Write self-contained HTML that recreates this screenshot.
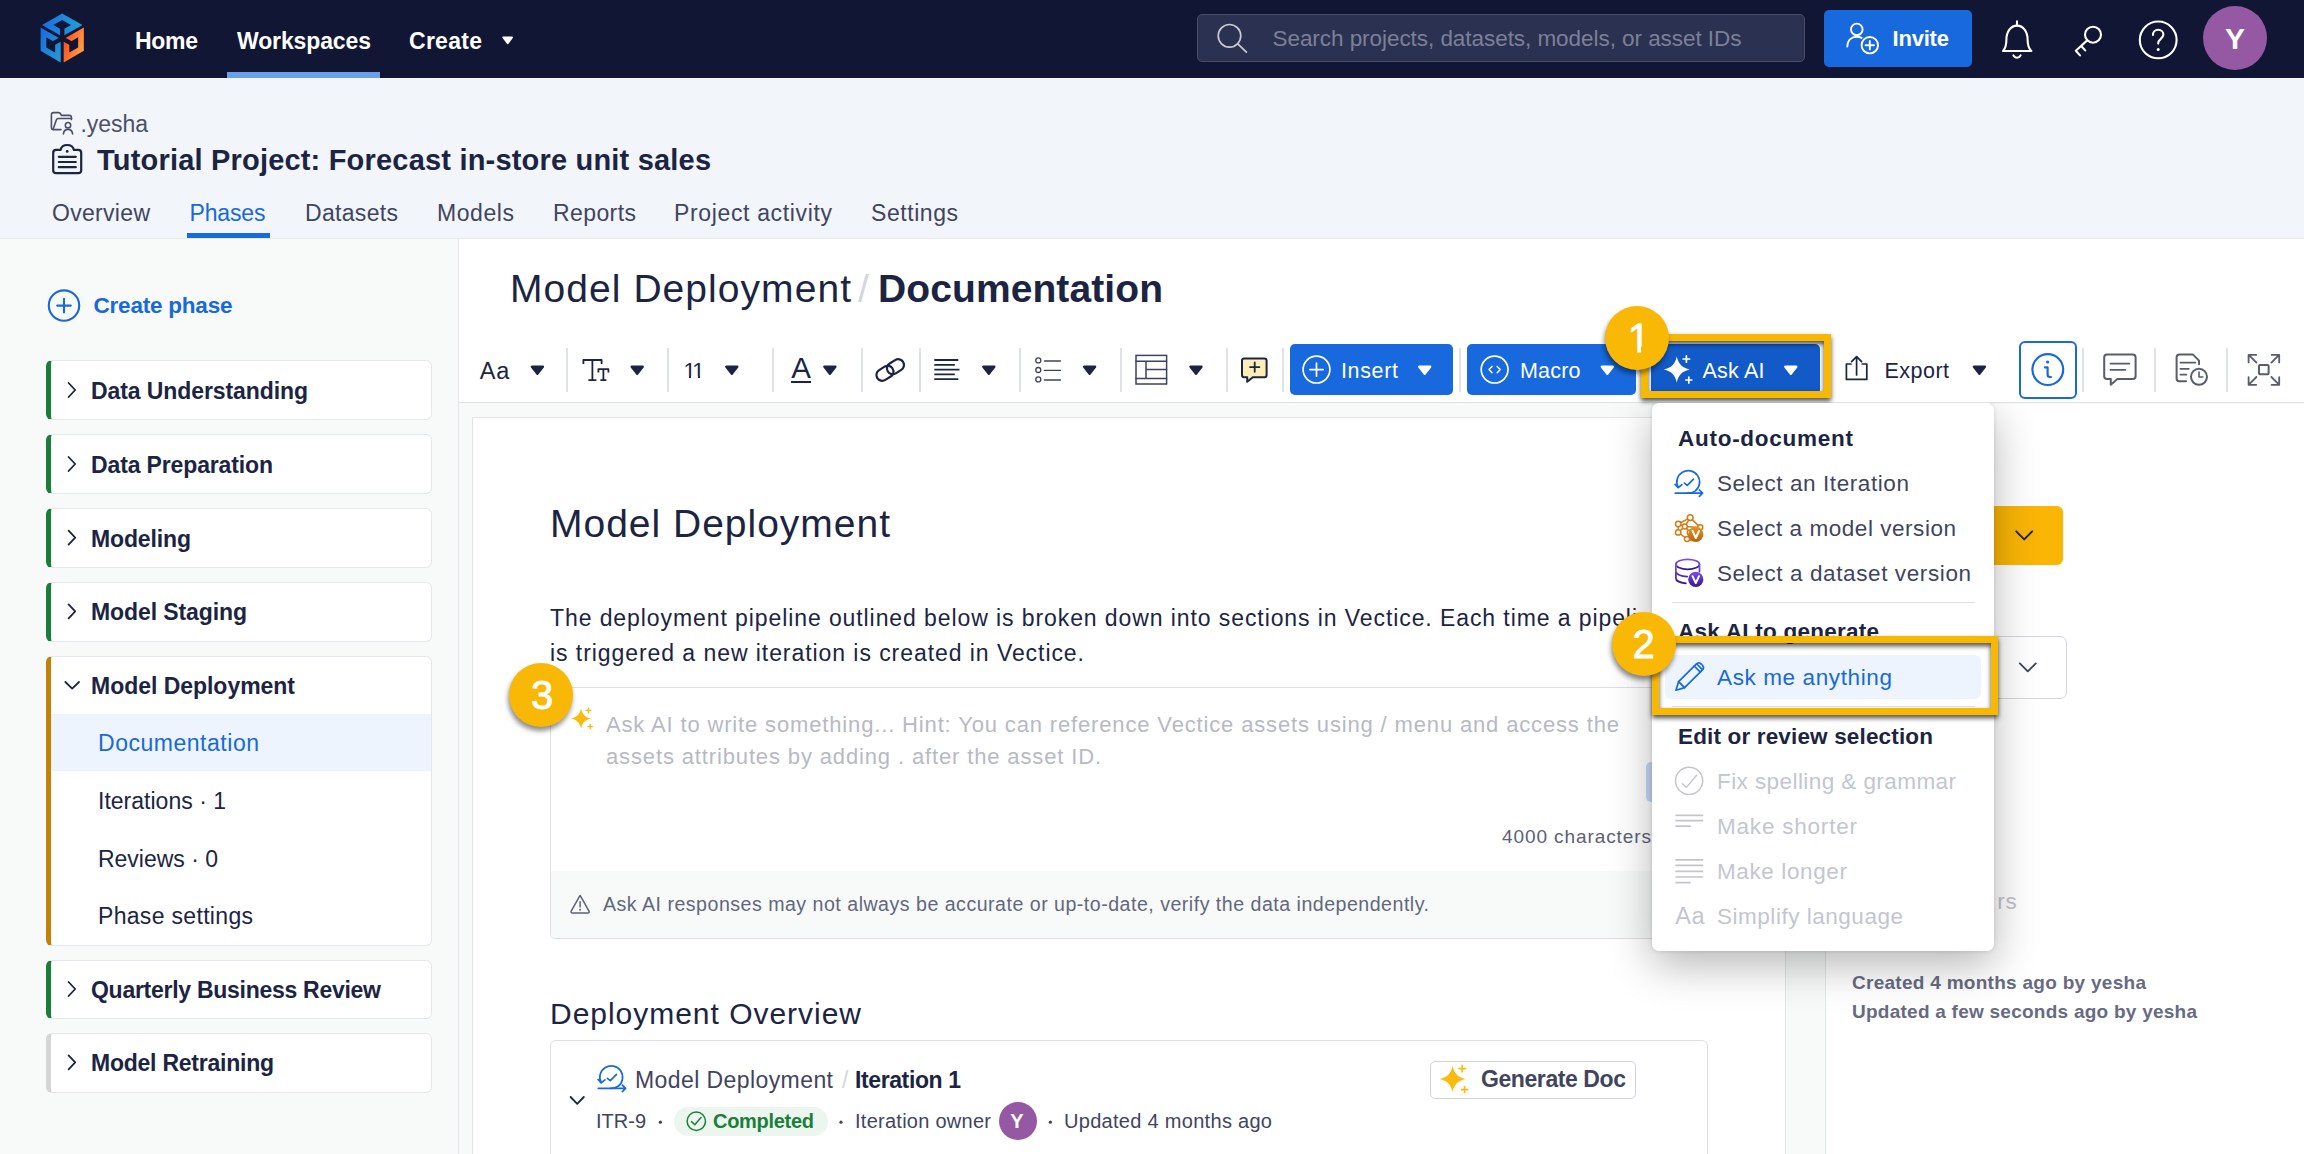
<!DOCTYPE html>
<html lang="en"><head><meta charset="utf-8"><title>Vectice - Model Deployment Documentation</title>
<style>
*{box-sizing:border-box;margin:0;padding:0}
html,body{width:2304px;height:1154px;overflow:hidden;background:#fff}
body{position:relative;font-family:"Liberation Sans",sans-serif;color:#1c2444}
.t{position:absolute;white-space:nowrap;line-height:normal;font-family:"Liberation Sans",sans-serif}
.b{position:absolute}
svg{position:absolute;overflow:visible}
.ph{left:46px;width:386px;background:#fff;border:1px solid #e4e7eb;border-left:5px solid #1b7d3a;border-radius:6px}
.sep{top:347.5px;width:1.6px;height:44px;background:#dfe2e7}
.bd{width:64px;height:64px;border-radius:50%;background:#f9b806;box-shadow:-1px 4px 5px rgba(0,0,0,.45);z-index:20}
.hl{border:7.5px solid #f9b800;filter:drop-shadow(0 3px 2.5px rgba(0,0,0,.7))}

</style></head>
<body>
<!-- top navigation -->
<div class="b" style="left:0;top:0;width:2304px;height:78px;background:#101633"></div>
<div class="b" style="left:227px;top:72px;width:153px;height:6px;background:#6b9fea"></div>
<div class="b" style="left:1197px;top:14px;width:608px;height:48px;background:#2b3150;border:1px solid #474c68;border-radius:5px"></div>
<div class="b" style="left:1824px;top:10px;width:148px;height:57px;background:#1769dd;border-radius:5px"></div>
<div class="b" style="left:2203px;top:6px;width:64px;height:64px;background:#9559a4;border-radius:50%"></div>
<!-- sub header -->
<div class="b" style="left:0;top:78px;width:2304px;height:160px;background:#f2f5fa"></div>
<div class="b" style="left:0;top:237.6px;width:2304px;height:1.2px;background:#e6e8eb"></div>
<div class="b" style="left:186.5px;top:232.7px;width:83.5px;height:5px;background:#1769dd"></div>
<!-- sidebar -->
<div class="b" style="left:0;top:238.8px;width:458px;height:916px;background:#f8fafa"></div>
<div class="b" style="left:458px;top:239px;width:1px;height:915px;background:#e3e6ea"></div>
<div class="b ph" style="top:360px;height:60px"></div>
<div class="b ph" style="top:434px;height:60px"></div>
<div class="b ph" style="top:508px;height:60px"></div>
<div class="b ph" style="top:582px;height:60px"></div>
<div class="b ph" style="top:656px;height:290px;border-left-color:#c4810a"></div>
<div class="b" style="left:51px;top:714px;width:380px;height:57px;background:#eef4fd"></div>
<div class="b ph" style="top:960px;height:59px"></div>
<div class="b ph" style="top:1033px;height:60px;border-left-color:#d6d6d6"></div>
<!-- main area -->
<div class="b" style="left:459px;top:402px;width:1845px;height:1.3px;background:#dfe1e5"></div>
<div class="b" style="left:459px;top:403.3px;width:1845px;height:751px;background:#f8fafa"></div>
<div class="b" style="left:472px;top:416.5px;width:1314px;height:760px;background:#fff;border:1.3px solid #e2e4e8"></div>
<div class="b" style="left:1825px;top:404px;width:479px;height:750px;background:#fff;border-left:1px solid #e3e6ea"></div>
<!-- toolbar separators -->
<div class="b sep" style="left:566px"></div><div class="b sep" style="left:667px"></div><div class="b sep" style="left:772px"></div>
<div class="b sep" style="left:861px"></div><div class="b sep" style="left:919px"></div><div class="b sep" style="left:1019px"></div>
<div class="b sep" style="left:1120px"></div><div class="b sep" style="left:1226px"></div><div class="b sep" style="left:1282px"></div>
<div class="b sep" style="left:1459px"></div><div class="b sep" style="left:2082px"></div><div class="b sep" style="left:2154px"></div><div class="b sep" style="left:2226px"></div>
<div class="b" style="left:791px;top:380.5px;width:20px;height:2px;background:#1c2444"></div>
<!-- toolbar buttons -->
<div class="b" style="left:1290px;top:344px;width:163px;height:51px;background:#1769dd;border-radius:5px"></div>
<div class="b" style="left:1467px;top:344px;width:169px;height:51px;background:#1769dd;border-radius:5px"></div>
<div class="b" style="left:1650.5px;top:344.4px;width:169px;height:50.6px;background:#115ac8;border-radius:5px"></div>
<div class="b hl" style="left:1640.5px;top:333.5px;width:190.5px;height:64.5px;z-index:3"></div>
<div class="b" style="left:2019px;top:341px;width:58px;height:58px;border:2px solid #1769dd;border-radius:6px;background:#fff"></div>
<!-- ask ai box -->
<div class="b" style="left:550px;top:687px;width:1158px;height:252px;border:1px solid #dcdfe5;border-radius:5px;background:#fff"></div>
<div class="b" style="left:551px;top:871px;width:1156px;height:67px;background:#f8fafa;border-radius:0 0 4px 4px"></div>
<div class="b" style="left:1646px;top:762px;width:40px;height:40px;background:#c6d8f7;border-radius:5px"></div>
<!-- iteration card -->
<div class="b" style="left:550px;top:1040.2px;width:1158px;height:141px;border:1px solid #dcdfe5;border-radius:6px;background:#fff"></div>
<div class="b" style="left:674px;top:1107px;width:153.500px;height:28.500px;background:#edf5ef;border-radius:15px"></div>
<div class="b" style="left:999.2px;top:1101.8px;width:38px;height:38px;background:#9559a4;border-radius:50%"></div>
<div class="b" style="left:1430px;top:1061px;width:206px;height:38px;border:1px solid #cfd2da;border-radius:5px;background:#fff"></div>
<!-- right panel partial controls -->
<div class="b" style="left:1900px;top:506px;width:163.3px;height:59px;background:#fab505;border-radius:6px"></div>
<div class="b" style="left:1900px;top:635.6px;width:167px;height:63px;border:1.2px solid #d3d6dc;border-radius:7px;background:#fff"></div>
<!-- dropdown -->
<div class="b" style="left:1540px;top:402.5px;width:600px;height:751.5px;overflow:hidden;z-index:10"><div class="b" style="left:112px;top:.5px;width:342.2px;height:548px;background:#fff;border-radius:7px;box-shadow:0 14px 44px rgba(0,0,0,.29),0 0 4px rgba(0,0,0,.13)"></div></div>
<div class="b" style="left:1672px;top:601.6px;width:303px;height:1.5px;background:#dcdfe4;z-index:11"></div>
<!-- highlight 2 -->
<div class="b" style="left:1665px;top:655px;width:316px;height:44px;background:#eef4fd;border-radius:6px;z-index:11"></div>
<div class="b" style="left:1672px;top:706.400px;width:303px;height:1px;background:#e1e3e8;z-index:11"></div>
<div class="b hl" style="left:1651.5px;top:636.3px;width:346.5px;height:78.8px;z-index:16"></div>
<!-- badges -->
<div class="b bd" style="left:1605px;top:306px"></div>
<div class="b bd" style="left:1612px;top:612px"></div>
<div class="b bd" style="left:509px;top:663px"></div>
<!-- trim badge digit foot -->
<div class="b" style="left:1626px;top:347.4px;width:10.8px;height:6px;background:#f9b806;z-index:22"></div>
<div class="b" style="left:1641.3px;top:347.4px;width:9px;height:6px;background:#f9b806;z-index:22"></div>
<!-- trim font-size digit feet -->
<div class="b" style="left:684px;top:375.5px;width:4.6px;height:3.2px;background:#fff;z-index:3"></div>
<div class="b" style="left:691.4px;top:375.5px;width:6.2px;height:3.2px;background:#fff;z-index:3"></div>
<div class="b" style="left:700.4px;top:375.5px;width:4px;height:3.2px;background:#fff;z-index:3"></div>

<svg style="left:0;top:0;z-index:2" width="2304" height="1154" viewBox="0 0 2304 1154" fill="none" stroke-linecap="round" stroke-linejoin="round">
<defs>
<linearGradient id="lgB" x1="0" y1="0" x2="1" y2="1"><stop offset="0" stop-color="#1b68e2"/><stop offset="1" stop-color="#1f9fd2"/></linearGradient>
<linearGradient id="lgT" x1="0" y1="0" x2="1" y2="0"><stop offset="0" stop-color="#1b6ce2"/><stop offset="1" stop-color="#1fa2d6"/></linearGradient>
<linearGradient id="lgO" x1="0" y1="0.3" x2="1" y2="0.8"><stop offset="0" stop-color="#ff4a1c"/><stop offset="1" stop-color="#ffa84a"/></linearGradient>
<path id="caret" d="M-5.5,-3.6h11l-5.5,7z" stroke-width="2.4"/>
<g id="iter"><path d="M-10.5,5.5A11.4,11.4 0 1 1 6.5,9.3C4,11 1,11.4-1,11.4"/><path d="M-13.5,2.5l3.2,3.4 3.6,-3"/><path d="M-13.3,11.4h27M10.8,8.2l3.2,3.2-3.2,3.2"/><path d="M-4.2,1.3l2.9,2.3 6.2,-6.3"/></g>
<g id="spark"><path d="M0,-13C1.7,-5.4 5.4,-1.7 13,0C5.4,1.7 1.7,5.4 0,13C-1.7,5.4 -5.4,1.7 -13,0C-5.4,-1.7 -1.7,-5.4 0,-13Z" stroke="none"/><path d="M9.6,-13.6v6.4M6.4,-10.4h6.4M12,7.6v6M9,10.6h6" fill="none" stroke-width="1.7"/></g>
</defs>
<!-- logo -->
<g stroke="none">
<polygon fill="url(#lgT)" points="62.2,13.4 82.4,25.0 62.2,36.6 42.0,25.0"/>
<polygon fill="#101633" points="62.2,19.9 71.0,25.0 62.2,30.1 53.4,25.0"/>
<path d="M62.2,28.6L62.2,38.3" stroke="#101633" stroke-width="4.4" stroke-linecap="butt"/>
<polygon fill="url(#lgB)" points="40.6,27.5 60.7,39.1 60.7,62.4 40.6,50.8"/>
<polygon fill="#101633" points="46.3,37.3 55.1,42.4 55.1,52.6 46.3,47.5"/>
<path d="M53.8,43.1L62.2,38.3" stroke="#101633" stroke-width="4.4" stroke-linecap="butt"/>
<polygon fill="url(#lgO)" points="83.8,27.5 83.8,50.8 63.7,62.4 63.7,39.1"/>
<polygon fill="#101633" points="78.1,37.3 78.1,47.5 69.3,52.6 69.3,42.4"/>
<path d="M70.6,43.1L62.2,38.3" stroke="#101633" stroke-width="4.4" stroke-linecap="butt"/>
</g>
<!-- nav carets/icons -->
<path d="M503.400,37.400h8.600l-4.300,5.800z" fill="#fff" stroke="#fff" stroke-width="2"/>
<g stroke="#c9cbd4" stroke-width="1.7"><circle cx="1229.5" cy="35.8" r="11.3"/><path d="M1237.8,43.8l8.6,8.4"/></g>
<g stroke="#fff" stroke-width="1.9">
<circle cx="1856.8" cy="29.4" r="5.8"/><path d="M1847.3,46.5c0.3,-6.5 4.4,-9.8 9.5,-9.8c1.8,0 3.4,0.4 4.8,1.2"/><circle cx="1869.8" cy="45.2" r="8.2"/><path d="M1869.8,41v8.4M1865.6,45.2h8.4"/>
</g>
<g stroke="#fff" stroke-width="2.1">
<path d="M2003,51h28.4c-3,-2.6 -3.8,-6.6 -3.8,-11.4c0,-8 -4.4,-14 -10.6,-14c-6.2,0 -10.600,6 -10.600,14c0,4.8 -0.8,8.800 -3.400,11.400z"/><path d="M2017,21.400v4M2013.400,55.400c0.8,1.600 2,2.400 3.600,2.400s2.800,-0.800 3.600,-2.400"/>
<circle cx="2093" cy="34.700" r="8"/><path d="M2087.200,40.400l-11.400,10.400 4.200,4.600M2081.200,46l4,4.400"/>
<circle cx="2158.200" cy="39.900" r="18.400"/><path d="M2153,35c0,-3.200 2.200,-5.200 5.200,-5.200s5.200,2 5.200,4.800c0,4 -5.200,4.200 -5.200,9"/>
</g>
<circle cx="2158.200" cy="49.400" r="1.500" fill="#fff"/>
<!-- workspace + project icons -->
<g stroke="#4b5068" stroke-width="1.600">
<path d="M61,129.600h-7.400c-1.400,0 -2.200,-0.800 -2.200,-2.200v-12.600c0,-1.400 0.800,-2.200 2.200,-2.200h5c1,0 1.600,0.400 2,1.200l0.800,1.600h7.800c1.400,0 2.200,0.800 2.200,2.200v2"/><path d="M53,129.400l3.400,-9.600c0.300,-0.900 0.900,-1.300 1.800,-1.300h13.400"/>
<circle cx="68" cy="125.200" r="2.700"/><path d="M63.400,134c0.300,-3 2,-4.600 4.600,-4.600s4.300,1.600 4.600,4.600"/>
</g>
<g stroke="#1c2444" stroke-width="2.200">
<path d="M60.600,149.800h-4.400c-1.800,0 -3,1.200 -3,3v17.400c0,1.800 1.200,3 3,3h22c1.800,0 3,-1.200 3,-3v-17.400c0,-1.800 -1.200,-3 -3,-3h-4.400c-0.600,-3 -3.200,-4.800 -6.600,-4.800s-6,1.800 -6.600,4.800z"/>
<path d="M58.800,156.800h17M58.800,162h17M58.800,167.200h17"/>
</g>
<circle cx="67.200" cy="151.400" r="1.400" fill="#1c2444"/>
<!-- create phase -->
<g stroke="#1769dd" stroke-width="2.100"><circle cx="64" cy="305.600" r="15.200"/><path d="M64,298.800v13.600M57.200,305.600h13.600"/></g>
<!-- sidebar chevrons -->
<g stroke="#1c2444" stroke-width="1.800">
<path d="M68.600,383l6.600,7 -6.600,7"/><path d="M68.600,457l6.600,7 -6.600,7"/><path d="M68.600,530.600l6.600,7 -6.600,7"/><path d="M68.600,604.400l6.600,7 -6.600,7"/>
<path d="M65.400,682l6.800,6.600 6.800,-6.600"/>
<path d="M68.600,982l6.600,7 -6.600,7"/><path d="M68.600,1055.400l6.600,7 -6.600,7"/>
</g>
<!-- toolbar carets -->
<g fill="#1c2444" stroke="#1c2444">
<use href="#caret" x="537.400" y="370.400"/><use href="#caret" x="637.200" y="370.400"/><use href="#caret" x="731.800" y="370.400"/><use href="#caret" x="829.900" y="370.400"/>
<use href="#caret" x="988.800" y="370.400"/><use href="#caret" x="1089.600" y="370.400"/><use href="#caret" x="1196" y="370.400"/><use href="#caret" x="1979.400" y="370.400"/>
</g>
<g fill="#fff" stroke="#fff"><use href="#caret" x="1424.700" y="370.400"/><use href="#caret" x="1607.300" y="370.400"/><use href="#caret" x="1790.800" y="370.400"/></g>
<!-- TT -->
<g stroke="#1c2444" stroke-width="1.800" stroke-linecap="butt">
<path d="M583.400,364v-4h18.200v4M592.400,360v20M588.400,380.200h8"/>
<path d="M598.400,372.400v-3.200h10v3.200M603.400,369.200v11M600.400,380.200h6"/>
</g>
<!-- link -->
<g stroke="#1c2444" stroke-width="2.200" transform="rotate(-32 890.200 370)">
<rect x="875" y="364.200" width="18" height="11.600" rx="5.800"/><rect x="887.400" y="364.200" width="18" height="11.600" rx="5.800"/>
</g>
<!-- align -->
<g stroke="#1c2444" stroke-width="1.800" stroke-linecap="butt">
<path d="M934.300,360h24M934.300,364.800h20.500M934.300,369.600h25.200M934.300,374.400h20.500M934.300,379.200h24"/>
</g>
<!-- list -->
<g stroke="#3c4260" stroke-width="1.300">
<circle cx="1038.300" cy="360.400" r="2.500"/><circle cx="1038.300" cy="370" r="2.500"/><circle cx="1038.300" cy="379.400" r="2.500"/>
<path d="M1044.400,361h16M1044.400,370.400h16M1044.400,380h16"/>
</g>
<!-- table -->
<g stroke="#3c4260" stroke-width="1.500" stroke-linejoin="miter">
<rect x="1136" y="355.400" width="30.600" height="28.600"/><path d="M1136,361.200h30.600M1146,361.200v17.200M1146,369.400h20.600M1136,378.400h30.600"/>
</g>
<!-- comment add -->
<g stroke="#1c2444" stroke-width="2">
<path d="M1244.200,358.400h20.200c1.400,0 2.200,0.800 2.200,2.200v14.400c0,1.400 -0.800,2.200 -2.200,2.200h-11.600l-5.600,4.600v-4.600h-3c-1.400,0 -2.200,-0.800 -2.200,-2.200v-14.400c0,-1.400 0.800,-2.200 2.200,-2.200z" fill="#fdeeb8"/>
<path d="M1254.700,362.400v9.400M1250,367.100h9.400" stroke-width="1.800"/>
</g>
<!-- insert / macro icons -->
<g stroke="#fff" stroke-width="1.700">
<circle cx="1316.500" cy="369.600" r="13.400"/><path d="M1316.500,363v13.200M1309.900,369.600h13.200"/>
<circle cx="1494.600" cy="369.600" r="13.400"/><path d="M1492,366.400l-3,3.200 3,3.200M1497.200,366.400l3,3.200 -3,3.200" stroke-width="1.500"/>
</g>
<!-- ask ai sparkle -->
<use href="#spark" x="1676.800" y="369.400" fill="#fff" stroke="#fff"/>
<!-- export -->
<g stroke="#1c2444" stroke-width="1.700">
<path d="M1851,364h-4.600v15.400h20.400v-15.400h-4.600"/><path d="M1856.600,375v-18.200M1851.600,361.600l5,-5 5,5"/>
</g>
<!-- info -->
<g stroke="#1769dd" stroke-width="2.200"><circle cx="2047.800" cy="369.600" r="15.400"/><path d="M2045,367.400h2.600v7.400c0,1.400 0.800,2.200 2.200,2.200h1.200"/></g>
<circle cx="2047.600" cy="362" r="1.600" fill="#1769dd"/>
<!-- right toolbar icons -->
<g stroke="#585d6e" stroke-width="2">
<path d="M2107,354.600h25.800c1.800,0 2.800,1 2.800,2.800v18.800c0,1.800 -1,2.800 -2.800,2.800h-15.400l-6.600,5.800v-5.800h-3.800c-1.800,0 -2.800,-1 -2.800,-2.800v-18.800c0,-1.800 1,-2.800 2.800,-2.800z"/>
<path d="M2110.400,363.600h19M2110.400,369.800h15" stroke-width="1.700"/>
<path d="M2186,381.200h-6.600c-1.800,0 -2.800,-1 -2.800,-2.800v-21c0,-1.800 1,-2.800 2.800,-2.800h13.600l6,6v3.600"/>
<path d="M2180.400,362.600h15M2180.400,368.800h8.400M2180.400,374.600h6" stroke-width="1.700"/>
<circle cx="2199" cy="376.800" r="8" fill="#fff"/><path d="M2199,372v5h3.800" stroke-width="1.600"/>
<rect x="2259" y="365" width="9.600" height="9.200" rx="1"/>
<path d="M2248.600,362.400v-7.600h7.600M2249,355.200l7.400,7.400M2279.200,362.400v-7.600h-7.600M2278.800,355.200l-7.400,7.400M2248.600,377.200v7.600h7.600M2249,384.400l7.400,-7.400M2279.200,377.200v7.600h-7.600M2278.800,384.400l-7.400,-7.400" stroke-width="1.800"/>
</g>
<!-- ask box icons -->
<use href="#spark" x="581" y="718.400" fill="#fbbb0c" stroke="#fbbb0c" transform="translate(581 718.400) scale(.77) translate(-581 -718.400)"/>
<g stroke="#5b6078" stroke-width="1.500" transform="translate(0 1.300)"><path d="M579.800,894.600l-8.600,15.200c-0.500,1 0,1.800 1.100,1.800h15.600c1.100,0 1.600,-0.800 1.100,-1.800l-8.600,-15.200c-0.200,-0.400 -0.400,-0.400 -0.600,0z"/><path d="M580.100,900.400v5.200"/></g>
<circle cx="580.100" cy="909.700" r="1" fill="#5b6078"/>
<!-- iteration card -->
<path d="M570.600,1097l6.600,6.800 6.600,-6.800" stroke="#1c2444" stroke-width="1.800"/>
<use href="#iter" x="611.600" y="1077" stroke="#1769dd" stroke-width="1.700"/>
<g stroke="#1b7f3b" stroke-width="1.500"><circle cx="696.300" cy="1121.200" r="9.200"/><path d="M691.600,1121.600l3.200,3.200 6.200,-7.200"/></g>
<circle cx="660.400" cy="1122.200" r="1.600" fill="#3c4260"/><circle cx="841" cy="1122.200" r="1.600" fill="#3c4260"/><circle cx="1050.400" cy="1122.200" r="1.600" fill="#3c4260"/>
<use href="#spark" x="1452.600" y="1079" fill="#fbbb0c" stroke="#fbbb0c"/>
<!-- right panel chevrons -->
<path d="M2016.200,531.400l8,8 8,-8" stroke="#1c2444" stroke-width="2"/>
<path d="M2019.800,663.400l8,8 8,-8" stroke="#3c4260" stroke-width="1.800"/>
</svg>
<svg style="left:0;top:0;z-index:15" width="2304" height="1154" viewBox="0 0 2304 1154" fill="none" stroke-linecap="round" stroke-linejoin="round">
<defs>
<linearGradient id="gOr" x1="0" y1="0" x2="0" y2="1"><stop offset="0" stop-color="#e8921c"/><stop offset="1" stop-color="#b5650f"/></linearGradient>
<linearGradient id="gPu" x1="0" y1="0" x2="0" y2="1"><stop offset="0" stop-color="#7b4df0"/><stop offset="1" stop-color="#34148f"/></linearGradient>
</defs>
<use href="#iter" x="1688.600" y="481.800" stroke="#1769dd" stroke-width="1.700"/>
<!-- model version -->
<g stroke="#cf7f17" stroke-width="1.500">
<path d="M1690.200,517.600l-12,6.400M1690.200,517.600l10,9.800M1690.200,517.600l-5.400,9M1678.200,524l6.600,2.600M1678.200,524l0,8.400M1678.200,532.400l6.600,-5.800M1684.800,526.600l5,6M1678.200,532.400l8.800,6.600M1684.800,526.600l15.400,0.800M1687,539l2.800,-6.400M1687,539l4,1.600"/>
<circle cx="1690.200" cy="517.600" r="2.900" fill="#fff"/><circle cx="1678.200" cy="524" r="2.700" fill="#fff"/><circle cx="1678.200" cy="532.400" r="2.700" fill="#fff"/><circle cx="1684.800" cy="526.600" r="2.500" fill="#fff"/><circle cx="1700.300" cy="527.200" r="2.500" fill="#fff"/><circle cx="1689.800" cy="532.600" r="2.500" fill="#fff"/><circle cx="1687" cy="539" r="2.500" fill="#fff"/>
</g>
<circle cx="1695.800" cy="534.300" r="7.600" fill="url(#gOr)"/>
<path d="M1692.600,531l3.200,7 3.200,-7" stroke="#fff" stroke-width="2"/>
<!-- dataset version -->
<g stroke="url(#gPu)" stroke-width="1.700">
<ellipse cx="1687.700" cy="564.300" rx="11.800" ry="5"/><path d="M1675.900,564.300v14c0,2.600 4.400,4.600 10,5M1699.500,564.300v7.400M1675.900,571.600c0,2.600 5,4.800 11.400,5"/>
</g>
<circle cx="1695.800" cy="579.400" r="7.600" fill="url(#gPu)"/>
<path d="M1692.600,576.200l3.200,7 3.200,-7" stroke="#fff" stroke-width="2"/>
<!-- pencil -->
<g stroke="#1769dd" stroke-width="1.700">
<path d="M1676,690.200l2.600,-8.600 17.600,-17.400c1.600,-1.600 3.600,-1.600 5.200,0l0.800,0.800c1.600,1.600 1.600,3.600 0,5.200l-17.600,17.400z"/><path d="M1678.600,681.600l6,6M1694.200,666l6.200,6.200M1696.800,664l5.600,5.600"/>
</g>
<!-- disabled icons -->
<g stroke="#c4c5ca" stroke-width="1.400">
<circle cx="1689.100" cy="780.800" r="13.600"/><path d="M1682.600,783.800l3.800,3.600 10.200,-12.200"/>
<path d="M1675.400,815.400h27.800M1675.400,820.600h27.800M1675.400,826.200h15.400" stroke-linecap="butt" stroke-width="1.700"/>
<path d="M1675.400,859.800h27.800M1675.400,865.400h27.800M1675.400,871.400h27.800M1675.400,877h27.800M1675.400,882.600h15.400" stroke-linecap="butt" stroke-width="1.700"/>
</g>
</svg>

<span class="t" id="t0" style="left:135px;top:27.6px;font-size:23px;font-weight:700;color:#ffffff;letter-spacing:-0.302px;">Home</span>
<span class="t" id="t1" style="left:237px;top:27.6px;font-size:23px;font-weight:700;color:#ffffff;letter-spacing:-0.122px;">Workspaces</span>
<span class="t" id="t2" style="left:409px;top:27.6px;font-size:23px;font-weight:700;color:#ffffff;letter-spacing:0.278px;">Create</span>
<span class="t" id="t3" style="left:1272.5px;top:26.2px;font-size:22.5px;font-weight:400;color:#7b8098;letter-spacing:-0.054px;">Search projects, datasets, models, or asset IDs</span>
<span class="t" id="t4" style="left:1892.5px;top:26.0px;font-size:22px;font-weight:700;color:#ffffff;letter-spacing:-0.194px;">Invite</span>
<span class="t" id="t5" style="left:2225px;top:21.6px;font-size:30px;font-weight:700;color:#ffffff;letter-spacing:0.000px;">Y</span>
<span class="t" id="t6" style="left:80.5px;top:110.6px;font-size:23px;font-weight:400;color:#4b5068;letter-spacing:-0.053px;">.yesha</span>
<span class="t" id="t7" style="left:97px;top:144.3px;font-size:29px;font-weight:700;color:#1c2444;letter-spacing:0.192px;">Tutorial Project: Forecast in-store unit sales</span>
<span class="t" id="t8" style="left:52px;top:199.8px;font-size:23px;font-weight:400;color:#3f4561;letter-spacing:0.306px;">Overview</span>
<span class="t" id="t9" style="left:305px;top:199.8px;font-size:23px;font-weight:400;color:#3f4561;letter-spacing:0.319px;">Datasets</span>
<span class="t" id="t10" style="left:437px;top:199.8px;font-size:23px;font-weight:400;color:#3f4561;letter-spacing:0.569px;">Models</span>
<span class="t" id="t11" style="left:553px;top:199.8px;font-size:23px;font-weight:400;color:#3f4561;letter-spacing:0.409px;">Reports</span>
<span class="t" id="t12" style="left:674px;top:199.8px;font-size:23px;font-weight:400;color:#3f4561;letter-spacing:0.649px;">Project activity</span>
<span class="t" id="t13" style="left:871px;top:199.8px;font-size:23px;font-weight:400;color:#3f4561;letter-spacing:0.556px;">Settings</span>
<span class="t" id="t14" style="left:189.5px;top:199.8px;font-size:23px;font-weight:400;color:#1769dd;letter-spacing:-0.144px;">Phases</span>
<span class="t" id="t15" style="left:93.5px;top:293.0px;font-size:22.5px;font-weight:700;color:#1769dd;letter-spacing:-0.212px;">Create phase</span>
<span class="t" id="t16" style="left:91px;top:378.4px;font-size:23px;font-weight:700;color:#1c2444;letter-spacing:-0.090px;">Data Understanding</span>
<span class="t" id="t17" style="left:91px;top:452.4px;font-size:23px;font-weight:700;color:#1c2444;letter-spacing:-0.138px;">Data Preparation</span>
<span class="t" id="t18" style="left:91px;top:526.4px;font-size:23px;font-weight:700;color:#1c2444;letter-spacing:-0.134px;">Modeling</span>
<span class="t" id="t19" style="left:91px;top:599.4px;font-size:23px;font-weight:700;color:#1c2444;letter-spacing:-0.098px;">Model Staging</span>
<span class="t" id="t20" style="left:91px;top:673.4px;font-size:23px;font-weight:700;color:#1c2444;letter-spacing:-0.031px;">Model Deployment</span>
<span class="t" id="t21" style="left:91px;top:977.4px;font-size:23px;font-weight:700;color:#1c2444;letter-spacing:-0.274px;">Quarterly Business Review</span>
<span class="t" id="t22" style="left:91px;top:1050.4px;font-size:23px;font-weight:700;color:#1c2444;letter-spacing:-0.237px;">Model Retraining</span>
<span class="t" id="t23" style="left:98px;top:730.4px;font-size:23px;font-weight:400;color:#1769dd;letter-spacing:0.525px;">Documentation</span>
<span class="t" id="t24" style="left:98px;top:788.4px;font-size:23px;font-weight:400;color:#1c2444;letter-spacing:0.012px;">Iterations · 1</span>
<span class="t" id="t25" style="left:98px;top:846.4px;font-size:23px;font-weight:400;color:#1c2444;letter-spacing:-0.016px;">Reviews · 0</span>
<span class="t" id="t26" style="left:98px;top:903.4px;font-size:23px;font-weight:400;color:#1c2444;letter-spacing:0.317px;">Phase settings</span>
<span class="t" id="t27" style="left:510px;top:267.1px;font-size:39px;font-weight:400;color:#1c2444;letter-spacing:1.055px;">Model Deployment</span>
<span class="t" id="t28" style="left:858px;top:267.1px;font-size:39px;font-weight:400;color:#d3d6dd;letter-spacing:0.000px;">/</span>
<span class="t" id="t29" style="left:878px;top:267.1px;font-size:39px;font-weight:700;color:#1c2444;letter-spacing:0.096px;">Documentation</span>
<span class="t" id="t30" style="left:479.8px;top:357.7px;font-size:23.5px;font-weight:400;color:#1c2444;letter-spacing:0.750px;">Aa</span>
<span class="t" id="t31" style="left:683.6px;top:358.0px;font-size:22px;font-weight:400;color:#1c2444;letter-spacing:0.000px;letter-spacing:-2px;">11</span>
<span class="t" id="t32" style="left:791.3px;top:351.2px;font-size:29.5px;font-weight:400;color:#1c2444;letter-spacing:0.000px;">A</span>
<span class="t" id="t33" style="left:1341px;top:358.5px;font-size:21.5px;font-weight:400;color:#ffffff;letter-spacing:0.644px;">Insert</span>
<span class="t" id="t34" style="left:1520px;top:358.5px;font-size:21.5px;font-weight:400;color:#ffffff;letter-spacing:0.191px;">Macro</span>
<span class="t" id="t35" style="left:1702.5px;top:358.5px;font-size:21.5px;font-weight:400;color:#ffffff;letter-spacing:0.209px;">Ask AI</span>
<span class="t" id="t36" style="left:1884.5px;top:358.5px;font-size:21.5px;font-weight:400;color:#1c2444;letter-spacing:0.472px;">Export</span>
<span class="t" id="t37" style="left:550px;top:502.3px;font-size:39px;font-weight:400;color:#1c2444;letter-spacing:0.989px;">Model Deployment</span>
<span class="t" id="t38" style="left:550px;top:605.4px;font-size:23px;font-weight:400;color:#1c2444;letter-spacing:0.912px;">The deployment pipeline outlined below is broken down into sections in Vectice. Each time a pipeline</span>
<span class="t" id="t39" style="left:550px;top:640.4px;font-size:23px;font-weight:400;color:#1c2444;letter-spacing:0.938px;">is triggered a new iteration is created in Vectice.</span>
<span class="t" id="t40" style="left:606px;top:712.0px;font-size:22px;font-weight:400;color:#b7b9c6;letter-spacing:0.850px;">Ask AI to write something... Hint: You can reference Vectice assets using / menu and access the</span>
<span class="t" id="t41" style="left:606px;top:744.0px;font-size:22px;font-weight:400;color:#b7b9c6;letter-spacing:0.861px;">assets attributes by adding . after the asset ID.</span>
<span class="t" id="t42" style="left:1502px;top:826.4px;font-size:19px;font-weight:400;color:#5b6078;letter-spacing:0.911px;">4000 characters left</span>
<span class="t" id="t43" style="left:603px;top:892.9px;font-size:19.6px;font-weight:400;color:#62677d;letter-spacing:0.491px;">Ask AI responses may not always be accurate or up-to-date, verify the data independently.</span>
<span class="t" id="t44" style="left:550px;top:996.6px;font-size:30px;font-weight:400;color:#1c2444;letter-spacing:0.976px;">Deployment Overview</span>
<span class="t" id="t45" style="left:635px;top:1067.4px;font-size:23px;font-weight:400;color:#3f4561;letter-spacing:0.416px;">Model Deployment</span>
<span class="t" id="t46" style="left:842px;top:1067.4px;font-size:23px;font-weight:400;color:#d3d6dd;letter-spacing:0.000px;">/</span>
<span class="t" id="t47" style="left:855px;top:1067.4px;font-size:23px;font-weight:700;color:#1c2444;letter-spacing:-0.392px;">Iteration 1</span>
<span class="t" id="t48" style="left:596px;top:1110.1px;font-size:20px;font-weight:400;color:#3f4561;letter-spacing:0.000px;">ITR-9</span>
<span class="t" id="t49" style="left:713px;top:1110.1px;font-size:20px;font-weight:700;color:#1b7f3b;letter-spacing:-0.293px;">Completed</span>
<span class="t" id="t50" style="left:855px;top:1110.1px;font-size:20px;font-weight:400;color:#3f4561;letter-spacing:0.265px;">Iteration owner</span>
<span class="t" id="t51" style="left:1010.2px;top:1110.1px;font-size:20px;font-weight:700;color:#ffffff;letter-spacing:0.000px;">Y</span>
<span class="t" id="t52" style="left:1064px;top:1110.1px;font-size:20px;font-weight:400;color:#3f4561;letter-spacing:0.296px;">Updated 4 months ago</span>
<span class="t" id="t53" style="left:1481px;top:1066.4px;font-size:23px;font-weight:700;color:#3f4561;letter-spacing:-0.415px;">Generate Doc</span>
<span class="t" id="t54" style="left:1852px;top:971.6px;font-size:19px;font-weight:700;color:#666b83;letter-spacing:0.280px;">Created 4 months ago by yesha</span>
<span class="t" id="t55" style="left:1852px;top:1000.6px;font-size:19px;font-weight:700;color:#666b83;letter-spacing:0.248px;">Updated a few seconds ago by yesha</span>
<span class="t" id="t56" style="left:1997.3px;top:889.0px;font-size:22.5px;font-weight:400;color:#c0c2cc;letter-spacing:0.750px;">rs</span>
<span class="t" id="t57" style="left:1678px;top:426.2px;font-size:22.5px;font-weight:700;color:#1c2444;letter-spacing:0.730px;z-index:11;">Auto-document</span>
<span class="t" id="t58" style="left:1717px;top:471.2px;font-size:22.5px;font-weight:400;color:#3f4561;letter-spacing:0.590px;z-index:11;">Select an Iteration</span>
<span class="t" id="t59" style="left:1717px;top:516.2px;font-size:22.5px;font-weight:400;color:#3f4561;letter-spacing:0.542px;z-index:11;">Select a model version</span>
<span class="t" id="t60" style="left:1717px;top:561.2px;font-size:22.5px;font-weight:400;color:#3f4561;letter-spacing:0.603px;z-index:11;">Select a dataset version</span>
<span class="t" id="t61" style="left:1678px;top:619.2px;font-size:22.5px;font-weight:700;color:#1c2444;letter-spacing:0.251px;z-index:11;">Ask AI to generate</span>
<span class="t" id="t62" style="left:1717px;top:665.2px;font-size:22.5px;font-weight:400;color:#1769dd;letter-spacing:0.618px;z-index:14;">Ask me anything</span>
<span class="t" id="t63" style="left:1678px;top:724.2px;font-size:22.5px;font-weight:700;color:#1c2444;letter-spacing:0.159px;z-index:11;">Edit or review selection</span>
<span class="t" id="t64" style="left:1717px;top:769.2px;font-size:22.5px;font-weight:400;color:#c3c6d0;letter-spacing:0.425px;z-index:11;">Fix spelling &amp; grammar</span>
<span class="t" id="t65" style="left:1717px;top:814.2px;font-size:22.5px;font-weight:400;color:#c3c6d0;letter-spacing:0.790px;z-index:11;">Make shorter</span>
<span class="t" id="t66" style="left:1717px;top:859.2px;font-size:22.5px;font-weight:400;color:#c3c6d0;letter-spacing:0.617px;z-index:11;">Make longer</span>
<span class="t" id="t67" style="left:1717px;top:904.2px;font-size:22.5px;font-weight:400;color:#c3c6d0;letter-spacing:0.524px;z-index:11;">Simplify language</span>
<span class="t" id="t68" style="left:1675.2px;top:903.4px;font-size:23.5px;font-weight:400;color:#c3c6d0;letter-spacing:0.750px;z-index:11;">Aa</span>
<span class="t" id="t69" style="left:1627.7px;top:316.1px;font-size:40px;font-weight:400;color:#ffffff;letter-spacing:0.000px;-webkit-text-stroke:0.8px #fff;z-index:21;">1</span>
<span class="t" id="t70" style="left:1632.6px;top:622.1px;font-size:40px;font-weight:400;color:#ffffff;letter-spacing:0.000px;-webkit-text-stroke:0.8px #fff;z-index:21;">2</span>
<span class="t" id="t71" style="left:531px;top:673.1px;font-size:40px;font-weight:400;color:#ffffff;letter-spacing:0.000px;-webkit-text-stroke:0.8px #fff;z-index:21;">3</span>
</body></html>
